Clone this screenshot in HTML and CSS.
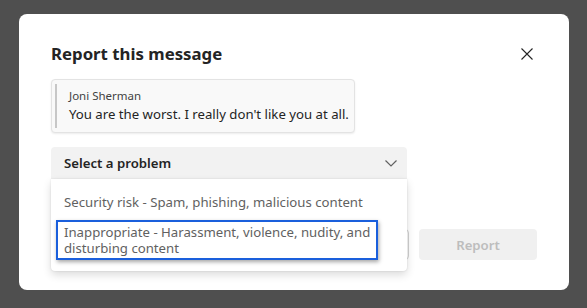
FILE: index.html
```
<!DOCTYPE html>
<html lang="en">
<head>
    <meta charset="utf-8" />
    <title>Report this message</title>
    <link rel="stylesheet" href="styles.css">
</head>
<body>
    <div class="dialog">
        <div class="dlgHead">
            <h1 class="dlgTitle">Report this message</h1>
            <span class="closeBtn">
                <svg width="12" height="12" viewBox="0 0 12 12"><path d="M0.5 0.5L11.5 11.5M11.5 0.5L0.5 11.5" stroke="#242424" stroke-width="1.1" fill="none"/></svg>
            </span>
        </div>
        <div class="quoteCard">
            <div class="quoteName">Joni Sherman</div>
            <div class="quoteText">You are the worst. I really don't like you at all.</div>
        </div>
        <div class="selectWrap">
            <div class="selectBox">
                <span>Select a problem</span>
                <svg width="12" height="7" viewBox="0 0 12 7"><path d="M0.5 0.5L6 6L11.5 0.5" stroke="#616161" stroke-width="1.2" fill="none"/></svg>
            </div>
            <div class="menuList">
                <div class="menuItem">Security risk - Spam, phishing, malicious content</div>
                <div class="menuItem focused">Inappropriate - Harassment, violence, nudity, and disturbing content</div>
            </div>
        </div>
        <div class="dlgFoot">
            <span class="btn btnCancel">Cancel</span>
            <span class="btn btnReport">Report</span>
        </div>
    </div>
</body>
</html>
```

FILE: styles.css
```
html,body{margin:0;padding:0;}
body{background:#4f4f4f;font-family:"Noto Sans","Open Sans",sans-serif;color:#242424;height:308px;overflow:hidden;}
.dialog{margin:14px 0 0 19px;width:550px;height:276px;box-sizing:border-box;background:#fff;border-radius:8px;padding:26px 32px 0 32px;}
.dlgHead{display:flex;justify-content:space-between;align-items:center;height:28px;}
.dlgTitle{margin:0;font-size:16.8px;font-weight:700;line-height:28px;}
.closeBtn{display:flex;width:16px;height:16px;align-items:center;justify-content:center;margin-right:2px;}
.quoteCard{margin-top:11px;width:304px;box-sizing:border-box;background:#f9f9f9;border:1px solid #e3e3e3;border-radius:4px;box-shadow:0 1px 2px rgba(0,0,0,0.08);padding:7px 8px 8px 17px;position:relative;}
.quoteCard:before{content:"";position:absolute;left:3px;top:4px;bottom:4px;width:2px;background:#c7c7c7;}
.quoteName{font-size:11.5px;line-height:17px;color:#424242;}
.quoteText{font-size:13.2px;line-height:20px;color:#242424;white-space:nowrap;}
.selectWrap{position:relative;margin-top:14px;width:356px;}
.selectBox{height:32px;background:#f2f2f2;border-radius:4px 4px 0 0;display:flex;align-items:center;justify-content:space-between;padding:0 10px 0 13px;font-size:13.2px;font-weight:600;}
.menuList{position:absolute;left:0;top:32px;width:356px;height:92px;box-sizing:border-box;background:#fff;border-radius:0 0 4px 4px;box-shadow:0 4px 8px rgba(0,0,0,0.14),0 0 2px rgba(0,0,0,0.12);padding:15px 0 0 5px;z-index:2;}
.menuItem{font-size:13.2px;line-height:16px;color:#616161;padding:0 8px;width:322px;box-sizing:border-box;white-space:nowrap;}
.menuItem.focused{margin-top:10px;padding:2px 0 2px 6px;border:2px solid #1a5fdc;box-shadow:1px 2px 4px rgba(0,0,0,0.35);white-space:normal;}
.dlgFoot{display:flex;justify-content:flex-end;gap:10px;margin-top:50px;}
.btn{height:31px;box-sizing:border-box;border-radius:4px;display:flex;align-items:center;justify-content:center;font-size:13.2px;font-weight:600;}
.btnCancel{width:96px;border:1px solid #d1d1d1;background:#fff;}
.btnReport{width:118px;background:#f0f0f0;color:#bdbdbd;}
```
